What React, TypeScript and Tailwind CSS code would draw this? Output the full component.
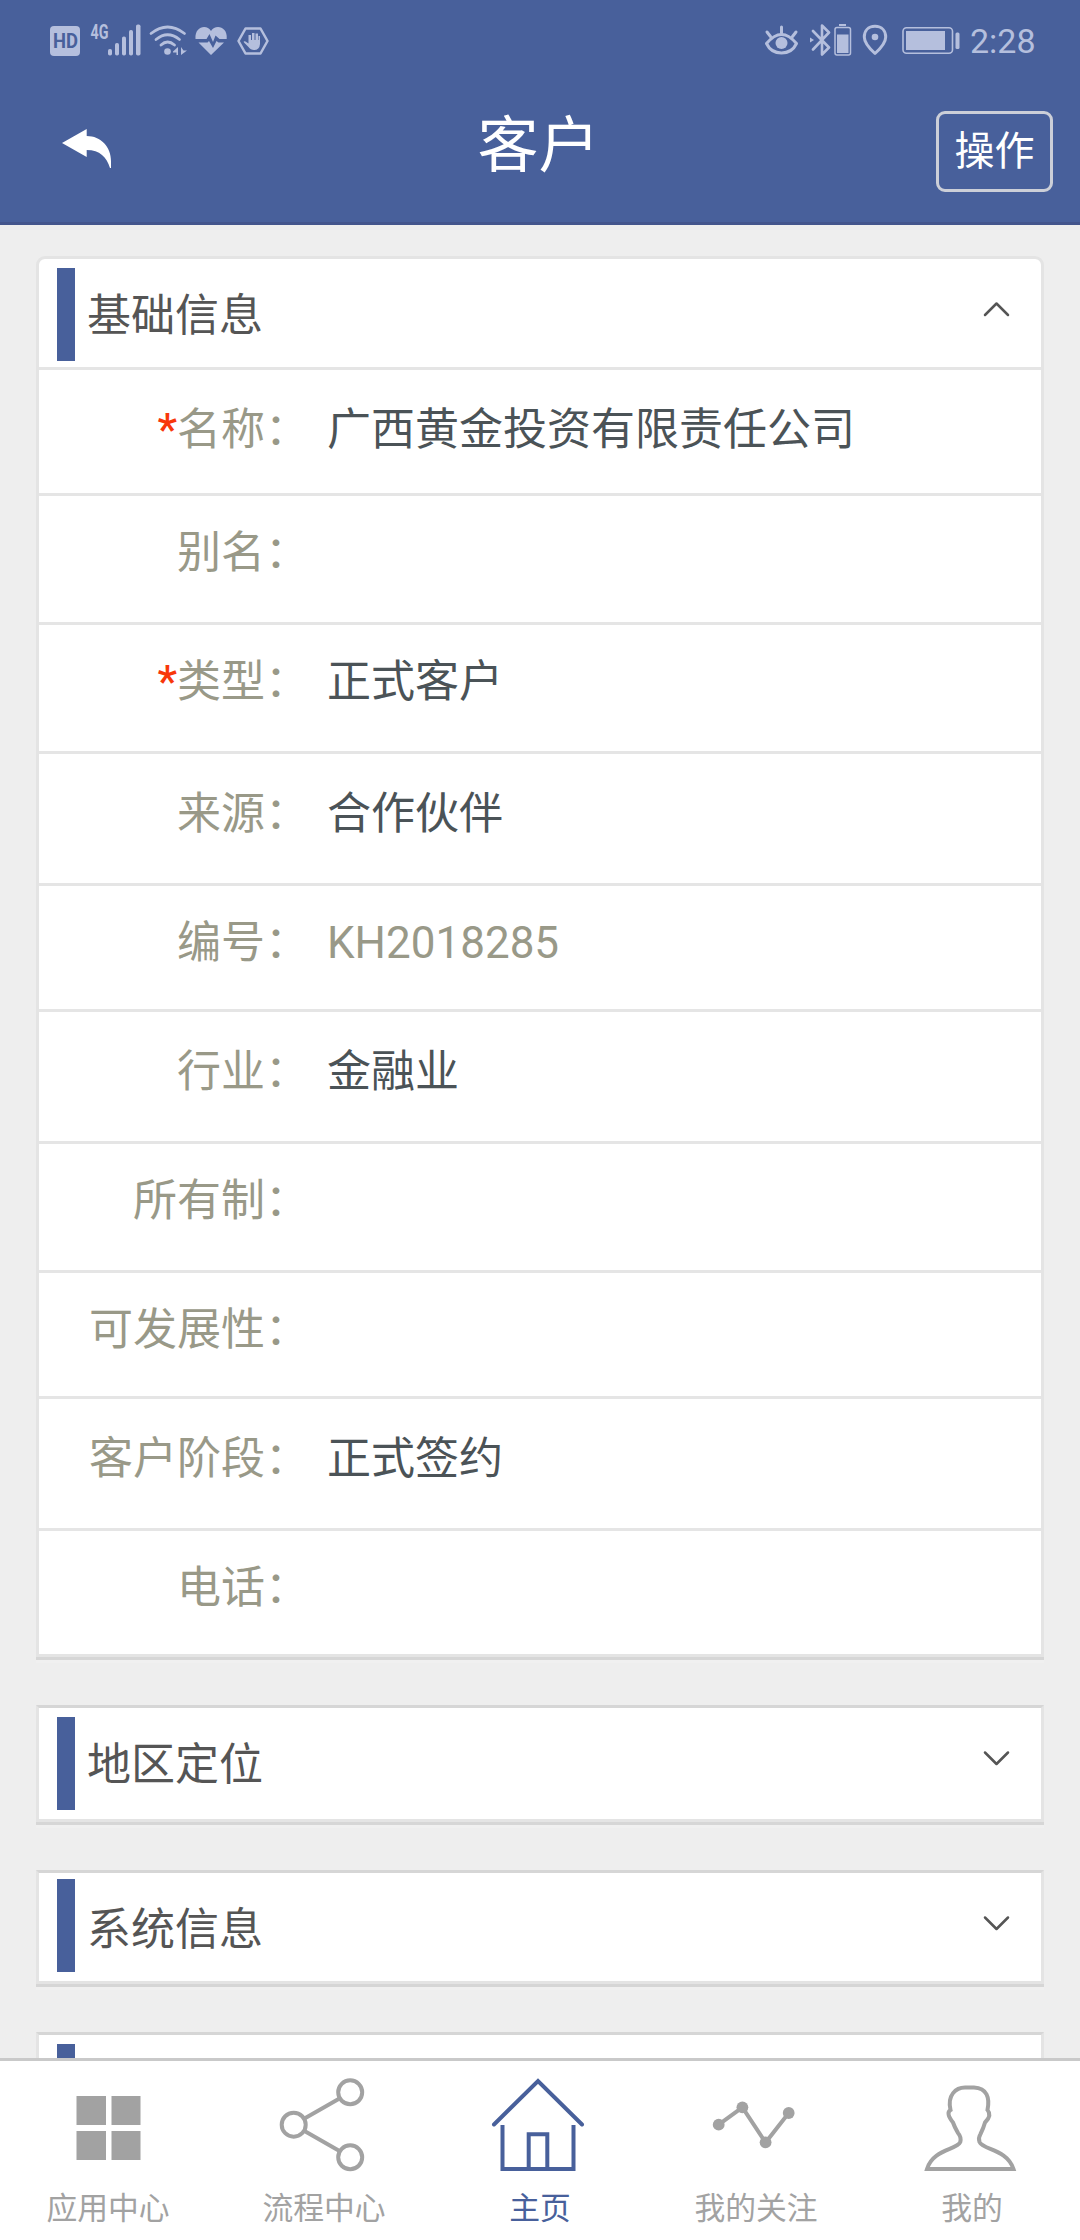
import { useState } from "react";
import type { ReactNode } from "react";

type Field = {
  label: string;
  value?: string;
  required?: boolean;
  muted?: boolean;
  size: string;
};

const fields: Field[] = [
  { label: "名称", value: "广西黄金投资有限责任公司", required: true, size: "h-[126px] pt-[38px]" },
  { label: "别名", size: "h-[129px] pt-[35px]" },
  { label: "类型", value: "正式客户", required: true, size: "h-[129px] pt-[35px]" },
  { label: "来源", value: "合作伙伴", size: "h-[132px] pt-[38px]" },
  { label: "编号", value: "KH2018285", muted: true, size: "h-[126px] pt-[35px]" },
  { label: "行业", value: "金融业", size: "h-[132px] pt-[38px]" },
  { label: "所有制", size: "h-[129px] pt-[35px]" },
  { label: "可发展性", size: "h-[126px] pt-[35px]" },
  { label: "客户阶段", value: "正式签约", size: "h-[132px] pt-[38px]" },
  { label: "电话", size: "h-[123px] pt-[35px]" },
];

function StatusBar() {
  return (
    <div className="flex h-[80px] items-start pt-[24px] text-[#b5bfdd]">
      {/* Left: network and health indicators */}
      <svg className="ml-[50px] h-8 w-[220px] overflow-visible" viewBox="50 24 220 32" fill="currentColor">
        <rect x="50" y="26" width="30" height="30" rx="4" />
        <text x="53" y="48" fontSize="19.500" fontWeight="700" textLength="25" lengthAdjust="spacingAndGlyphs" fill="#48609b">
          HD
        </text>
        <text x="90.500" y="39" fontSize="19.500" fontWeight="700" textLength="18" lengthAdjust="spacingAndGlyphs">
          4G
        </text>
        <rect x="108" y="49" width="4" height="6.500" rx="1.800" />
        <rect x="115" y="43" width="4" height="12.500" rx="1.800" />
        <rect x="122" y="36.500" width="4" height="19" rx="1.800" />
        <rect x="129" y="30" width="4" height="25.500" rx="1.800" />
        <rect x="136" y="24.500" width="4.500" height="31" rx="1.800" />
        <g fill="none" stroke="currentColor" strokeWidth="2.800" strokeLinecap="round">
          <path d="M151 33.500Q167.500 20.500 184.500 33.500" />
          <path d="M156 39.500Q167.500 30 179.500 39.500" />
          <path d="M161 45Q167.500 39 174.500 45" />
        </g>
        <circle cx="167.500" cy="51.500" r="3.300" />
        <path d="M173 51.500L178 47V55H176.500V52.500H173ZM181 47V55L187 50.500H183.500Z" />
        <path d="M195.500 39C194.500 26 207 24 211 31C215 24 228 26 226.700 39H219.500L215.500 35.500L213 42L209.500 34L206.500 39Z" />
        <path d="M198.500 42.500H207.500L209 41L213 48L216.500 41L218.500 42.500H224L211 55Z" />
        <path d="M245.500 28.500H260.500L267.500 41L260.500 53.500H245.500L238.500 41Z" fill="none" stroke="currentColor" strokeWidth="2.500" strokeLinejoin="round" />
        <path d="M248.500 47L244 42.500Q243 40.500 245.500 41.500L248.500 43.500V35H251V40H252V33H254.500V40H255.500V33.500H258V40H258.500V36H260V44Q259.500 50 254 50Q250.500 50 248.500 47Z" />
      </svg>
      {/* Right: sensors, battery and clock */}
      <svg className="ml-[490px] h-8 w-[202px]" viewBox="760 24 202 32" fill="none" stroke="currentColor" strokeWidth="3" strokeLinecap="round" strokeLinejoin="round">
        <path d="M766.500 43.500Q781.500 25.500 796.500 43.500Q792 53 781.500 53Q771 53 766.500 43.500Z" />
        <circle cx="781.500" cy="43" r="6" fill="currentColor" stroke="none" />
        <path d="M781.500 27V33M767 32L770.500 36.500M796 32L792.500 36.500" />
        <path d="M813 31L829 47.500L822 54.500V25.500L829 32.500L813 49.500" strokeWidth="2.600" />
        <path d="M810 37.500L814 40L810 42.500Z" fill="currentColor" stroke="none" />
        <rect x="835" y="27.500" width="15.500" height="27.500" rx="2" strokeWidth="1.500" />
        <path d="M837 34.500H848.500V53H837ZM839 24H846V26H839Z" fill="currentColor" stroke="none" />
        <path d="M875 26.300C868 26.300 864.300 31 864.300 37C864.300 43 870 49 875 53.500C880 49 885.700 43 885.700 37C885.700 31 882 26.300 875 26.300Z" />
        <circle cx="875" cy="37" r="3.300" fill="currentColor" stroke="none" />
        <rect x="903" y="27.800" width="49.500" height="25.500" rx="3.500" strokeWidth="1.600" />
        <path d="M906 31H945V50H906Z" fill="currentColor" stroke="none" />
        <rect x="955.500" y="32.500" width="4" height="16.500" rx="1.500" fill="currentColor" stroke="none" />
      </svg>
      <span className="ml-[8px] text-[34px] leading-[34px]">2:28</span>
    </div>
  );
}

function Header() {
  return (
    <header className="h-[225px] shrink-0 border-b-[3px] border-[#43558c] bg-[#48609b]">
      <StatusBar />
      <div className="grid grid-cols-[216px_1fr_216px] items-start text-white">
        <button className="mt-[48px] ml-[62px] w-[50px]" aria-label="返回">
          <svg className="h-10 w-[50px]" viewBox="62 128 50 40" fill="currentColor">
            <path d="M62 143L86.700 129V136C101 136 111 147 111 161V168H110C106.500 157 100 150 86.700 150V157Z" />
          </svg>
        </button>
        <h1 className="mt-[36px] mr-[3px] text-center text-[61px] leading-[61px]">客户</h1>
        <button className="mt-[31px] ml-[72px] h-[81px] w-[117px] rounded-[9px] border-[3px] border-[#cccfd8] text-[40px] leading-[72px]">
          操作
        </button>
      </div>
    </header>
  );
}

function Chevron({ open }: { open: boolean }) {
  return (
    <svg className="mt-[42px] mr-[31px] ml-auto h-4 w-[27px]" viewBox="0 0 27 16" fill="none" stroke="#555" strokeWidth="2.500" strokeLinecap="round" strokeLinejoin="round">
      <path d={open ? "M2 14L13.500 2.500L25 14" : "M2 2.500L13.500 14L25 2.500"} />
    </svg>
  );
}

function FieldRow({ field, last }: { field: Field; last: boolean }) {
  return (
    <div className={`flex items-start text-[44px] leading-[44px] ${field.size} ${last ? "" : "border-b-[3px] border-[#e5e5e5]"}`}>
      <div className="w-[270px] shrink-0 text-right text-[#999988]">
        {field.required && <span className="font-medium text-[#f8370a]">*</span>}
        {field.label}：
      </div>
      <div className={`ml-[18px] ${field.muted ? "text-[#999988]" : "text-[#4b5357]"}`}>{field.value}</div>
    </div>
  );
}

type PanelProps = {
  title?: string;
  className: string;
  headClass: string;
  barClass?: string;
  defaultOpen?: boolean;
  children?: ReactNode;
};

function Panel({ title, className, headClass, barClass = "mt-[9px]", defaultOpen = false, children }: PanelProps) {
  const [open, setOpen] = useState(defaultOpen);
  return (
    <section className={`shrink-0 border-x-[3px] border-x-[#e4e4e4] bg-white shadow-[0_3px_0_#d6d6d6,0_6px_0_#f0f0f0] ${className}`}>
      <div className={`flex items-start ${headClass}`} onClick={() => setOpen(!open)}>
        <span className={`ml-[18px] h-[93px] w-[18px] bg-[#48609b] ${barClass}`} />
        {title && <h2 className="mt-[35px] ml-[12px] text-[44px] leading-[44px] text-[#555]">{title}</h2>}
        <Chevron open={open} />
      </div>
      {open && children}
    </section>
  );
}

const tabs: { name: string; active?: boolean; icon: ReactNode }[] = [
  {
    name: "应用中心",
    icon: <path d="M22.500 31H52V60H22.500ZM57.500 31H86.500V60H57.500ZM22.500 66H52V95H22.500ZM57.500 66H86.500V95H57.500Z" fill="currentColor" stroke="none" />,
  },
  {
    name: "流程中心",
    icon: (
      <>
        <circle cx="23.700" cy="59.700" r="12" />
        <circle cx="80.200" cy="27.300" r="12" />
        <circle cx="80.200" cy="92.300" r="12" />
        <path d="M34.500 53.500L69.500 33.500M34.500 66L69.500 86" />
      </>
    ),
  },
  {
    name: "主页",
    active: true,
    icon: (
      <>
        <path d="M8 59.500L52 16L96 59.500" strokeLinecap="round" />
        <path d="M16.500 60V104H87.500V60M42.700 104V69.200H61.300V104" />
      </>
    ),
  },
  {
    name: "我的关注",
    icon: (
      <>
        <path d="M16.700 59.700L40.400 42.300L63.600 77.500L86.700 48" />
        <g fill="currentColor" stroke="none">
          <circle cx="16.700" cy="59.700" r="5.900" />
          <circle cx="40.400" cy="42.300" r="5.900" />
          <circle cx="63.600" cy="77.300" r="5.900" />
          <circle cx="86.700" cy="48" r="5.900" />
        </g>
      </>
    ),
  },
  {
    name: "我的",
    icon: (
      <path d="M9 104C15 84 39 85 42.300 77Q43.500 72 40 68Q36.500 62 35 57.500Q27.500 48 32.500 45C29 30 38 22.500 47 22.500H56C69 23 72 33 69.500 45C74 50 69.500 55 67 57.500Q65.500 63 62.500 69Q60 73 61.500 77C65 85 89 84 95.500 104Z" />
    ),
  },
];

function TabBar() {
  return (
    <nav className="grid h-[182px] shrink-0 grid-cols-5 border-t-[3px] border-[#c9c9c9] bg-white">
      {tabs.map((tab) => (
        <a key={tab.name} className={`flex flex-col items-center ${tab.active ? "text-[#48609b]" : "text-[#a2a2a2]"}`}>
          <svg className="mt-[4px] h-[110px] w-[108px]" viewBox="0 0 108 110" fill="none" stroke="currentColor" strokeWidth="4">
            {tab.icon}
          </svg>
          <span className="mt-[18px] text-[30.8px] leading-[31px]">{tab.name}</span>
        </a>
      ))}
    </nav>
  );
}

export default function App() {
  return (
    <div className="flex h-[2240px] w-[1080px] flex-col overflow-hidden bg-[#eee] font-['Roboto','Noto_Sans_CJK_SC',sans-serif]">
      <Header />
      <main className="flex min-h-0 flex-1 flex-col overflow-hidden px-[36px] pt-[31px]">
        <Panel
          title="基础信息"
          defaultOpen
          className="rounded-t-[9px] border-y-[3px] border-y-[#e4e4e4]"
          headClass="h-[111px] border-b-[3px] border-[#e5e5e5]"
        >
          {fields.map((field, i) => (
            <FieldRow key={field.label} field={field} last={i === fields.length - 1} />
          ))}
        </Panel>
        <Panel title="地区定位" className="mt-[48px] border-y-[3px] border-t-[#d6d6d6] border-b-[#e4e4e4]" headClass="h-[111px]" />
        <Panel title="系统信息" className="mt-[48px] border-y-[3px] border-t-[#d6d6d6] border-b-[#e4e4e4]" headClass="h-[108px]" barClass="mt-[6px]" />
        <Panel className="mt-[48px] border-y-[3px] border-t-[#d6d6d6] border-b-[#e4e4e4]" headClass="h-[111px]" />
      </main>
      <TabBar />
    </div>
  );
}
